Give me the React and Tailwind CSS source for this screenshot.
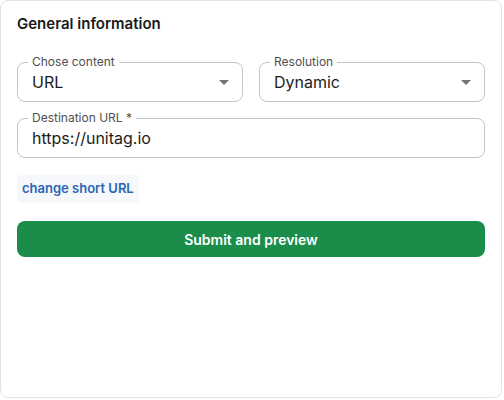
import React from 'react';

const font = { fontFamily: 'Inter, "Noto Sans", sans-serif' };

const OutlinedField = ({ label, value, select, wide }) => {
  return (
    <div className={`relative h-10 rounded-lg border border-[#c4c4c4] bg-white flex items-center pl-[14px] pr-[13px] ${wide ? 'w-full' : 'flex-1'}`}>
      <span className="absolute -top-[9px] left-[10px] bg-white px-1 text-[12px] leading-4 text-[#4f4f4f]">
        {label}
      </span>
      <span className="flex-1 text-[16px] text-[#1c1c1c]">{value}</span>
      {select && (
        <svg width="10" height="5" viewBox="0 0 10 5">
          <path d="M0 0 L10 0 L5 5 Z" fill="#757575" />
        </svg>
      )}
    </div>
  );
};

const App = () => {
  return (
    <div className="w-[504px] h-[400px] bg-white" style={font}>
      <div className="w-[502px] h-[398px] rounded-lg border border-[#e3e3e3] bg-white px-4 pt-[13px]">
        <h2 className="text-[15px] font-semibold leading-5 text-[#1a1a1a]">General information</h2>
        <div className="mt-[28px] flex gap-4">
          <OutlinedField label="Chose content" value="URL" select />
          <OutlinedField label="Resolution" value="Dynamic" select />
        </div>
        <div className="mt-4">
          <OutlinedField label="Destination URL *" value="https://unitag.io" wide />
        </div>
        <div className="mt-[17px]">
          <button className="h-7 rounded bg-[#f6f8fc] px-[5px] text-[13px] font-semibold text-[#2a65b5]">
            change short URL
          </button>
        </div>
        <button className="mt-[18px] h-9 w-full rounded-lg bg-[#1b8d4a] text-[14px] font-semibold text-white">
          Submit and preview
        </button>
      </div>
    </div>
  );
};

export default App;
